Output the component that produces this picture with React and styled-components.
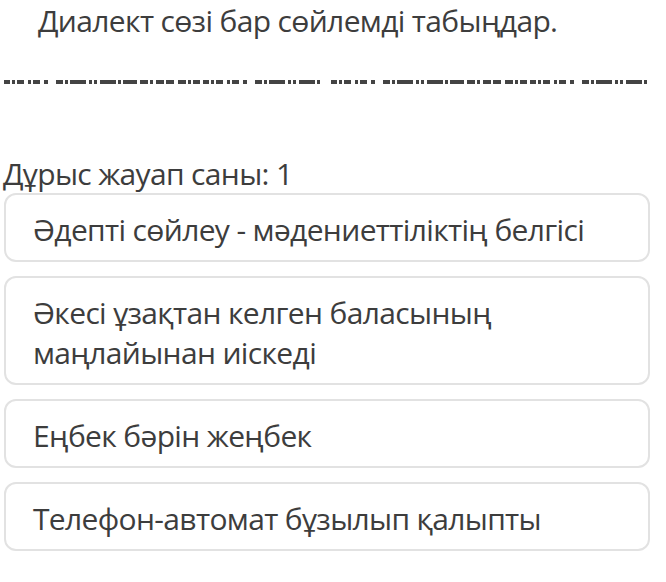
import styled, { createGlobalStyle } from 'styled-components';

const GlobalStyle = createGlobalStyle`
  html, body {
    margin: 0;
    padding: 0;
    background: #fff;
  }
  body {
    font-family: "Open Sans", "Noto Sans", sans-serif;
    color: #3d3d3d;
  }
`;

const answers = [
  'Әдепті сөйлеу - мәдениеттіліктің белгісі',
  'Әкесі ұзақтан келген баласының маңлайынан иіскеді',
  'Еңбек бәрін жеңбек',
  'Телефон-автомат бұзылып қалыпты',
];

// irregular dashes of the blank line
const DASHES = '6 2 3 2 7 4 3 2 7 4 4 8 7 2 3 2 16 3 3 2 3 3 16 2 3 2 14 3 8 2 3 3 8 2 8 4 8 2 3 2 7 3';

const App = () => {
  return (
    <Page>
      <GlobalStyle />
      <Question>Диалект сөзі бар сөйлемді табыңдар.</Question>

      {/* blank to fill in */}
      <Blank>
        <svg width="644" height="4" viewBox="0 0 644 4">
          <line x1="0" y1="2" x2="318" y2="2" stroke="#444" strokeWidth="4" strokeDasharray={DASHES} />
          <line x1="327" y1="2" x2="644" y2="2" stroke="#444" strokeWidth="4" strokeDasharray={DASHES} />
        </svg>
      </Blank>

      <Count>Дұрыс жауап саны: 1</Count>

      <Options>
        {answers.map((a) => (
          <Option key={a}>{a}</Option>
        ))}
      </Options>
    </Page>
  );
};

/* ================= STYLES ================= */

const Page = styled.div`
  width: 666px;
  min-height: 582px;
`;

const Question = styled.h1`
  margin: 0;
  padding-left: 38px;
  font-size: 30px;
  font-weight: 400;
  line-height: 41px;
  letter-spacing: -0.65px;
`;

const Blank = styled.div`
  padding: 39px 0 0 4px;
  height: 4px;
  display: flex;

  svg {
    display: block;
  }
`;

const Count = styled.div`
  margin-top: 73px;
  padding-left: 3px;
  font-size: 30px;
  line-height: 34px;
  letter-spacing: -0.65px;
`;

const Options = styled.div`
  display: flex;
  flex-direction: column;
  gap: 14px;
  margin-top: 2px;
  padding: 0 16px 0 4px;
`;

const Option = styled.div`
  border: 2px solid #e2e2e2;
  border-radius: 12px;
  padding: 15px 28px 10px 27px;
  font-size: 30px;
  line-height: 40px;
  letter-spacing: -0.65px;
`;

export default App;
